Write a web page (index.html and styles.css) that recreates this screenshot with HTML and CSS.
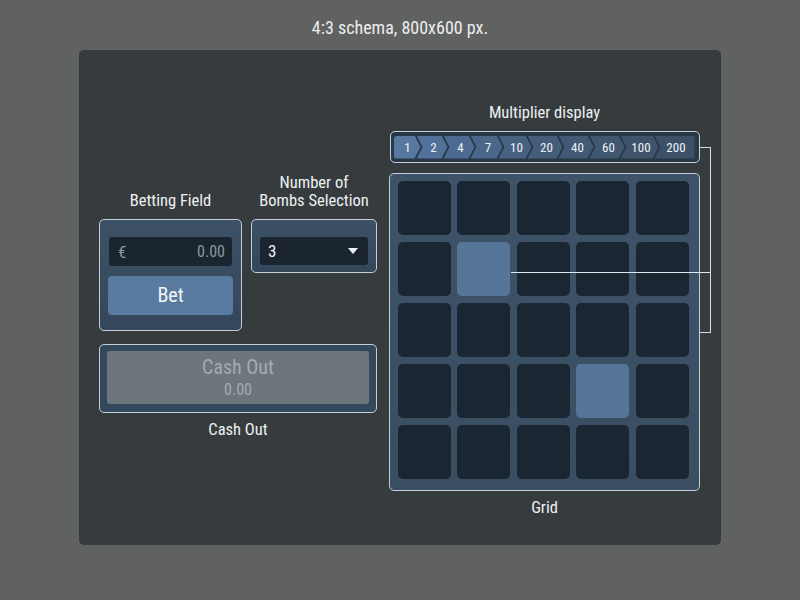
FILE: index.html
```html
<!DOCTYPE html>
<html>
<head>
<meta charset="utf-8">
<link rel="stylesheet" href="styles.css">
</head>
<body>
<div class="title">4:3 schema, 800x600 px.</div>
<div class="panel">
  <div class="left">
    <div class="top-row">
      <div class="label bet-label">Betting Field</div>
      <div class="label bomb-label">Number of<br>Bombs Selection</div>
      <div class="box bet-box">
        <div class="input"><span class="cur">€</span><span class="amount">0.00</span></div>
        <div class="bet-btn">Bet</div>
      </div>
      <div class="box bomb-box">
        <div class="select"><span>3</span><span class="caret"></span></div>
      </div>
    </div>
    <div class="box cash-box">
      <div class="cash-btn"><span class="cash-title">Cash Out</span><span class="cash-val">0.00</span></div>
    </div>
    <div class="label cash-label">Cash Out</div>
  </div>
  <div class="right">
    <div class="label">Multiplier display</div>
    <div class="mult-bar">
      <div class="chev">1</div>
      <div class="chev">2</div>
      <div class="chev">4</div>
      <div class="chev">7</div>
      <div class="chev">10</div>
      <div class="chev">20</div>
      <div class="chev">40</div>
      <div class="chev">60</div>
      <div class="chev">100</div>
      <div class="chev">200</div>
    </div>
    <div class="grid">
      <div class="cell"></div><div class="cell"></div><div class="cell"></div><div class="cell"></div><div class="cell"></div>
      <div class="cell"></div><div class="cell on"></div><div class="cell"></div><div class="cell"></div><div class="cell"></div>
      <div class="cell"></div><div class="cell"></div><div class="cell"></div><div class="cell"></div><div class="cell"></div>
      <div class="cell"></div><div class="cell"></div><div class="cell"></div><div class="cell on"></div><div class="cell"></div>
      <div class="cell"></div><div class="cell"></div><div class="cell"></div><div class="cell"></div><div class="cell"></div>
    </div>
    <div class="label grid-label">Grid</div>
    <div class="bracket"></div>
    <div class="pointer"></div>
  </div>
</div>
</body>
</html>
```
FILE: styles.css
```css
* { box-sizing: border-box; }
html, body { margin: 0; padding: 0; }
body {
  width: 800px;
  height: 600px;
  background: #606161;
  font-family: "Roboto Condensed", "Liberation Sans Narrow", "Roboto", sans-serif;
  color: #e8ecef;
  overflow: hidden;
}
.title {
  height: 50px;
  padding-top: 17px;
  text-align: center;
  font-size: 18px;
  line-height: 21px;
  color: #eceeef;
}
.panel {
  margin: 0 79px;
  height: 495px;
  background: #363c3e;
  border-radius: 5px;
  display: flex;
  padding: 54px 21px 0 20px;
  gap: 12px;
}
.label {
  font-size: 16.5px;
  line-height: 18px;
  text-align: center;
  color: #eef1f3;
}
.left {
  width: 278px;
  margin-top: 70px;
  display: flex;
  flex-direction: column;
}
.top-row {
  display: grid;
  grid-template-columns: 143px 126px;
  column-gap: 9px;
  row-gap: 9px;
  align-items: start;
}
.bet-label, .bomb-label { align-self: end; }
.box {
  border: 1.5px solid #c3ceda;
  border-radius: 5px;
  background: linear-gradient(#3d5166, #34475a);
}
.bet-box {
  height: 112px;
  padding: 17px 8px 0 8px;
}
.input {
  height: 29px;
  margin: 0 1px;
  background: #1a2530;
  border-radius: 3px;
  display: flex;
  justify-content: space-between;
  align-items: center;
  padding: 0 7px 0 9px;
  font-size: 16px;
  color: #8d97a1;
}
.cur { font-size: 17px; }
.bet-btn {
  margin-top: 10px;
  height: 39px;
  background: #5a7ba0;
  border-radius: 4px;
  text-align: center;
  line-height: 39px;
  font-size: 20px;
  color: #f2f5f8;
}
.bomb-box {
  height: 54px;
  padding: 17px 8px 0 8px;
}
.select {
  height: 28px;
  background: #1a2530;
  border-radius: 3px;
  display: flex;
  justify-content: space-between;
  align-items: center;
  padding: 0 10px 0 8px;
  font-size: 17px;
  color: #eef1f4;
}
.caret {
  width: 0; height: 0;
  border-left: 5px solid transparent;
  border-right: 5px solid transparent;
  border-top: 6px solid #f0f3f6;
}
.cash-box {
  margin-top: 13px;
  height: 69px;
  padding: 6px 7px 8px 7px;
  background: #34485c;
}
.cash-btn {
  height: 100%;
  background: #6e767d;
  border-radius: 3px;
  display: flex;
  flex-direction: column;
  align-items: center;
  justify-content: center;
  color: #a3abb3;
}
.cash-title { font-size: 20px; line-height: 21px; }
.cash-val { font-size: 16px; line-height: 18px; margin-top: 3px; }
.cash-label { margin-top: 8px; }

.right {
  width: 311px;
  position: relative;
  display: flex;
  flex-direction: column;
}
.mult-bar {
  margin-top: 9px;
  margin-left: 1px;
  height: 32px;
  border: 1.5px solid #c3ceda;
  border-radius: 5px;
  background: #283847;
  padding: 3.5px 2px 0 2.5px;
  display: flex;
}
.chev {
  height: 23px;
  line-height: 23px;
  font-size: 13px;
  color: #eef2f6;
  text-align: center;
  padding: 0 5px 0 8px;
  margin-left: -4px;
  clip-path: polygon(0 0, calc(100% - 6px) 0, 100% 50%, calc(100% - 6px) 100%, 0 100%, 6px 50%);
  background: #46607d;
}
.chev:first-child {
  margin-left: 0;
  padding-left: 6px;
  clip-path: polygon(0 0, calc(100% - 6px) 0, 100% 50%, calc(100% - 6px) 100%, 0 100%);
  background: #5878a0;
  width: 27px;
  border-radius: 3px 0 0 3px;
}
.chev:nth-child(2) { width: 31px; background: #51709a; }
.chev:nth-child(3) { width: 31px; background: #4d6a90; }
.chev:nth-child(4) { width: 32px; background: #4a6688; }
.chev:nth-child(5) { width: 33px; background: #476281; }
.chev:nth-child(6) { width: 35px; background: #445d7b; }
.chev:nth-child(7) { width: 35px; background: #425a75; }
.chev:nth-child(8) { width: 35px; background: #405770; }
.chev:nth-child(9) { width: 38px; background: #3e546b; }
.chev:nth-child(10) { width: 40px; background: #3c5167; clip-path: polygon(0 0, 100% 0, 100% 100%, 0 100%, 6px 50%); border-radius: 0 3px 3px 0; }

.grid {
  margin-top: 10px;
  height: 318px;
  border: 1.5px solid #c3ceda;
  border-radius: 5px;
  background: linear-gradient(#3e5368, #3a4e62);
  padding: 6.5px 9px 0 7.5px;
  display: grid;
  grid-template-columns: repeat(5, 53px);
  grid-template-rows: repeat(5, 54px);
  column-gap: 6.5px;
  row-gap: 7px;
}
.cell {
  background: #1a2631;
  border-radius: 5px;
}
.cell.on { background: #557698; }
.grid-label { margin-top: 8px; }

.bracket {
  position: absolute;
  left: 311px;
  top: 43px;
  width: 10.5px;
  height: 186px;
  border: 1.5px solid #d5dde5;
  border-left: none;
}
.pointer {
  position: absolute;
  left: 122px;
  top: 167.5px;
  width: 199px;
  height: 1.5px;
  background: #e0e6ec;
}
```
